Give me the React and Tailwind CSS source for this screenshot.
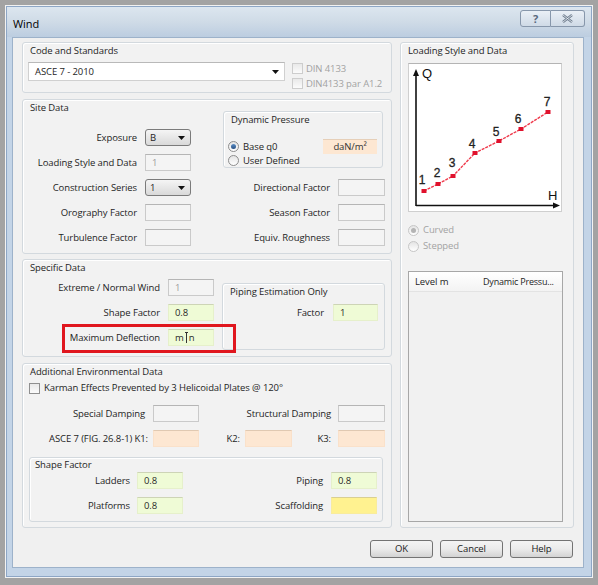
import React from "react";

const tones = {
  plain: "bg-[#f4f4f4] border-[#cacaca] border-t-[#b5b5b5]",
  green: "bg-[#effbd6] border-[#e6f0cb] border-t-[#cdd4b6]",
  orange: "bg-[#fde7d2] border-[#fae1ca] border-t-[#e0c9b2]",
  yellow: "bg-[#fff290] border-[#f9ec9c] border-t-[#d9cf92]",
};

function Field({ w = "w-[46px]", tone = "plain", muted = false, children }) {
  return (
    <div
      className={`${w} h-[17px] shrink-0 flex items-center pl-[6px] border ${tones[tone]} ${
        muted ? "text-[#9c9c9c]" : "text-[#2a2a2a]"
      }`}
    >
      {children}
    </div>
  );
}

function Arrow() {
  return (
    <svg width="7" height="4" viewBox="0 0 7 4">
      <path d="M0 0H7L3.5 4Z" fill="#111" />
    </svg>
  );
}

function Combo({ value }) {
  return (
    <div className="w-[46px] h-[17px] shrink-0 flex items-center justify-between pl-[4px] pr-[5px] rounded-[3px] border border-[#7b7b7b] bg-gradient-to-b from-[#f5f5f5] to-[#d9d9d9]">
      <span>{value}</span>
      <Arrow />
    </div>
  );
}

function Radio({ checked = false, disabled = false }) {
  return (
    <div
      className={`w-[11px] h-[11px] shrink-0 rounded-full border flex items-center justify-center bg-gradient-to-b from-[#e4e4e4] to-[#ffffff] ${
        disabled ? "border-[#c6c6c6]" : "border-[#8d8d8d]"
      }`}
    >
      {checked && (
        <div
          className={`w-[5px] h-[5px] rounded-full ${
            disabled ? "bg-[#b4b4b4]" : "bg-gradient-to-b from-[#5d8fc6] to-[#274f82]"
          }`}
        />
      )}
    </div>
  );
}

function Check({ disabled = false }) {
  return (
    <div
      className={`w-[11px] h-[11px] shrink-0 border bg-gradient-to-b from-[#e9e9e9] to-[#fbfbfb] ${
        disabled ? "border-[#cdcdcd]" : "border-[#8f8f8f]"
      }`}
    />
  );
}

function GroupLabel({ children }) {
  return <div className="h-[16px] shrink-0 pl-[7px] flex items-center whitespace-nowrap">{children}</div>;
}

const groupCls =
  "border border-[#d3d9de] rounded-[3px] bg-[#f2f2f2] shadow-[inset_1px_1px_0_#ffffff]";

function Chart() {
  const pts = [
    [16, 128],
    [30, 121],
    [45, 113],
    [67, 90],
    [91, 78],
    [113, 66],
    [140, 49],
  ];
  const labels = [
    [14, 121],
    [29, 114],
    [44, 104],
    [64, 85],
    [88, 73],
    [110, 60],
    [139, 43],
  ];
  return (
    <svg width="154" height="149" viewBox="0 0 154 149" className="block">
      <rect x="0.5" y="0.5" width="153" height="148" fill="#ffffff" stroke="#cfcfcf" />
      <line x1="0.5" y1="0.5" x2="153.5" y2="0.5" stroke="#b4b4b4" />
      <line x1="8" y1="143" x2="8" y2="12" stroke="#111" strokeWidth="1.6" />
      <polygon points="8,6 5,13 11,13" fill="#111" />
      <line x1="8" y1="142.5" x2="146" y2="142.5" stroke="#111" strokeWidth="1.6" />
      <polygon points="152,142.5 145,139.5 145,145.5" fill="#111" />
      <text x="14" y="15" fontSize="13" fontFamily="Liberation Sans, Arial, sans-serif" fill="#111">
        Q
      </text>
      <text x="140" y="137" fontSize="13" fontFamily="Liberation Sans, Arial, sans-serif" fill="#111">
        H
      </text>
      <polyline
        points={pts.map((p) => p.join(",")).join(" ")}
        fill="none"
        stroke="#ef3a4c"
        strokeWidth="1.4"
        strokeDasharray="3 1"
      />
      {pts.map(([x, y], i) => (
        <rect key={i} x={x - 2.5} y={y - 2} width="5" height="4" fill="#e0112c" />
      ))}
      {labels.map(([x, y], i) => (
        <text
          key={i}
          x={x}
          y={y}
          textAnchor="middle"
          fontSize="12"
          fontFamily="Liberation Sans, Arial, sans-serif"
          stroke="#222"
          strokeWidth="0.3"
          fill="#222"
        >
          {i + 1}
        </text>
      ))}
    </svg>
  );
}

function Button({ children }) {
  return (
    <div className="w-[63px] h-[18px] flex items-center justify-center rounded-[3px] border border-[#737373] bg-gradient-to-b from-[#f4f4f4] via-[#ebebeb] to-[#d3d3d3] text-[#1a1a1a]">
      {children}
    </div>
  );
}

export default function App() {
  return (
    <div className="w-[598px] h-[585px] overflow-hidden bg-[#a3a3a3] pt-[5px] pl-[5px] font-['Open_Sans','Noto_Sans',sans-serif] text-[9.5px] tracking-[-0.1px] leading-none text-[#1e1e1e]">
      <div className="w-[588px] h-[573px] border border-[#f2f2f2]">
        <div className="w-[586px] h-[571px] flex flex-col border border-[#8da6c5] bg-[#c3d4e7]">
          {/* Title bar */}
          <div className="h-[30px] shrink-0 flex items-start bg-gradient-to-b from-[#dce6ef] via-[#cfdbe7] to-[#bccde0]">
            <span className="mt-[11px] ml-[6px] text-[11px] text-black">Wind</span>
            <div className="ml-auto mr-[6px] mt-[3px] flex">
              <div className="w-[31px] h-[17px] flex items-center justify-center rounded-l-[3px] border border-[#8797ab] bg-gradient-to-b from-[#eaf0f6] to-[#cfdae6] text-[11px] font-bold text-[#59697d]">
                ?
              </div>
              <div className="w-[34px] h-[17px] flex items-center justify-center rounded-r-[3px] border border-l-0 border-[#8797ab] bg-gradient-to-b from-[#eaf0f6] to-[#cfdae6]">
                <svg width="11" height="9" viewBox="0 0 11 9">
                  <path d="M1 1L10 8M10 1L1 8" stroke="#6b7a8c" strokeWidth="2.4" />
                  <path d="M1 1L10 8M10 1L1 8" stroke="#eef2f6" strokeWidth="0.8" />
                </svg>
              </div>
            </div>
          </div>

          {/* Client */}
          <div className="ml-[5px] w-[572px] h-[531px] border border-[#9db2ca] bg-[#f0f0f0] flex flex-col">
            <div className="flex pt-[4px] pl-[9px]">
              {/* Left column */}
              <div className="w-[370px] flex flex-col">
                {/* Code and Standards */}
                <div className={`h-[51px] ${groupCls}`}>
                  <GroupLabel>Code and Standards</GroupLabel>
                  <div className="flex">
                    <div className="ml-[5px] mt-[3px] w-[257px] h-[19px] flex items-center justify-between pl-[6px] pr-[5px] bg-white border border-[#d0d0d0] border-t-[#b9b9b9]">
                      <span>ASCE 7 - 2010</span>
                      <Arrow />
                    </div>
                    <div className="ml-[7px] mt-[2px] flex flex-col text-[#a2a2a2]">
                      <div className="h-[15px] flex items-center gap-[3px]">
                        <Check disabled />
                        <span>DIN 4133</span>
                      </div>
                      <div className="h-[15px] flex items-center gap-[3px]">
                        <Check disabled />
                        <span>DIN4133 par A1.2</span>
                      </div>
                    </div>
                  </div>
                </div>

                {/* Site Data */}
                <div className={`mt-[6px] h-[155px] flex ${groupCls}`}>
                  <div className="w-[168px] flex flex-col">
                    <GroupLabel>Site Data</GroupLabel>
                    <div className="mt-[13px] flex flex-col gap-[8px]">
                      <div className="h-[17px] flex items-center justify-end">
                        <span>Exposure</span>
                        <div className="ml-[8px]">
                          <Combo value="B" />
                        </div>
                      </div>
                      <div className="h-[17px] flex items-center justify-end">
                        <span>Loading Style and Data</span>
                        <div className="ml-[8px]">
                          <Field muted>1</Field>
                        </div>
                      </div>
                      <div className="h-[17px] flex items-center justify-end">
                        <span>Construction Series</span>
                        <div className="ml-[8px]">
                          <Combo value="1" />
                        </div>
                      </div>
                      <div className="h-[17px] flex items-center justify-end">
                        <span>Orography Factor</span>
                        <div className="ml-[8px]">
                          <Field />
                        </div>
                      </div>
                      <div className="h-[17px] flex items-center justify-end">
                        <span>Turbulence Factor</span>
                        <div className="ml-[8px]">
                          <Field />
                        </div>
                      </div>
                    </div>
                  </div>
                  <div className="ml-[32px] pt-[11px] w-[162px] flex flex-col">
                    <div className={`w-[160px] h-[57px] flex flex-col ${groupCls}`}>
                      <GroupLabel>Dynamic Pressure</GroupLabel>
                      <div className="mt-[11px] h-[17px] flex items-center pl-[4px]">
                        <Radio checked />
                        <span className="ml-[4px]">Base q0</span>
                        <div className="ml-auto mr-[5px] w-[54px] h-[15px] flex items-center justify-center bg-[#fde7d2] border-t border-[#e6cfb8] text-[#333]">
                          daN/m²
                        </div>
                      </div>
                      <div className="h-[16px] flex items-center pl-[4px]">
                        <Radio />
                        <span className="ml-[4px]">User Defined</span>
                      </div>
                    </div>
                    <div className="mt-[11px] flex flex-col gap-[8px]">
                      <div className="h-[17px] flex items-center justify-end">
                        <span>Directional Factor</span>
                        <div className="ml-[8px]">
                          <Field w="w-[47px]" />
                        </div>
                      </div>
                      <div className="h-[17px] flex items-center justify-end">
                        <span>Season Factor</span>
                        <div className="ml-[8px]">
                          <Field w="w-[47px]" />
                        </div>
                      </div>
                      <div className="h-[17px] flex items-center justify-end">
                        <span>Equiv. Roughness</span>
                        <div className="ml-[8px]">
                          <Field w="w-[47px]" />
                        </div>
                      </div>
                    </div>
                  </div>
                </div>

                {/* Specific Data */}
                <div className={`relative mt-[5px] h-[98px] flex ${groupCls}`}>
                  <div className="w-[191px] flex flex-col">
                    <GroupLabel>Specific Data</GroupLabel>
                    <div className="mt-[3px] flex flex-col gap-[8px]">
                      <div className="h-[17px] flex items-center justify-end">
                        <span>Extreme / Normal Wind</span>
                        <div className="ml-[8px]">
                          <Field muted>1</Field>
                        </div>
                      </div>
                      <div className="h-[17px] flex items-center justify-end">
                        <span>Shape Factor</span>
                        <div className="ml-[8px]">
                          <Field tone="green">0.8</Field>
                        </div>
                      </div>
                      <div className="h-[17px] flex items-center justify-end">
                        <span>Maximum Deflection</span>
                        <div className="ml-[8px]">
                          <Field tone="green">
                            <span>m</span>
                            <span className="relative inline-block w-[3px] h-[11px] mx-[1px]">
                              <span className="absolute left-[1px] top-0 w-[1px] h-[11px] bg-[#333]" />
                              <span className="absolute left-0 top-0 w-[3px] h-[1px] bg-[#333]" />
                            </span>
                            <span>n</span>
                          </Field>
                        </div>
                      </div>
                    </div>
                  </div>
                  <div className={`ml-[8px] mt-[23px] w-[163px] h-[67px] flex flex-col ${groupCls}`}>
                    <GroupLabel>Piping Estimation Only</GroupLabel>
                    <div className="mt-[4px] h-[17px] flex items-center justify-end pr-[6px]">
                      <span>Factor</span>
                      <div className="ml-[9px]">
                        <Field w="w-[45px]" tone="green">1</Field>
                      </div>
                    </div>
                  </div>
                  <div className="absolute left-[39px] top-[64px] w-[174px] h-[29px] border-[3px] border-[#e0161e]" />
                </div>

                {/* Additional Environmental Data */}
                <div className={`mt-[6px] h-[165px] flex flex-col ${groupCls}`}>
                  <GroupLabel>Additional Environmental Data</GroupLabel>
                  <div className="mt-[2px] h-[12px] flex items-center pl-[6px]">
                    <Check />
                    <span className="ml-[4px]">Karman Effects Prevented by 3 Helicoidal Plates @ 120°</span>
                  </div>
                  <div className="mt-[11px] h-[17px] flex items-center">
                    <div className="w-[122px] text-right">Special Damping</div>
                    <div className="ml-[8px]">
                      <Field />
                    </div>
                    <div className="w-[132px] text-right">Structural Damping</div>
                    <div className="ml-[7px]">
                      <Field w="w-[47px]" />
                    </div>
                  </div>
                  <div className="mt-[8px] h-[17px] flex items-center">
                    <div className="w-[125px] text-right">ASCE 7 (FIG. 26.8-1) K1:</div>
                    <div className="ml-[5px]">
                      <Field tone="orange" />
                    </div>
                    <div className="w-[41px] text-right">K2:</div>
                    <div className="ml-[5px]">
                      <Field w="w-[47px]" tone="orange" />
                    </div>
                    <div className="w-[39px] text-right">K3:</div>
                    <div className="ml-[7px]">
                      <Field w="w-[47px]" tone="orange" />
                    </div>
                  </div>
                  <div className={`mt-[10px] ml-[6px] w-[354px] h-[65px] flex flex-col ${groupCls}`}>
                    <div className="h-[13px] pl-[5px] flex items-center">Shape Factor</div>
                    <div className="mt-[1px] h-[17px] flex items-center">
                      <div className="w-[100px] text-right">Ladders</div>
                      <div className="ml-[7px]">
                        <Field tone="green">0.8</Field>
                      </div>
                      <div className="w-[140px] text-right">Piping</div>
                      <div className="ml-[8px]">
                        <Field tone="green">0.8</Field>
                      </div>
                    </div>
                    <div className="mt-[8px] h-[17px] flex items-center">
                      <div className="w-[100px] text-right">Platforms</div>
                      <div className="ml-[7px]">
                        <Field tone="green">0.8</Field>
                      </div>
                      <div className="w-[140px] text-right">Scaffolding</div>
                      <div className="ml-[8px]">
                        <Field tone="yellow" />
                      </div>
                    </div>
                  </div>
                </div>
              </div>

              {/* Right column */}
              <div className={`ml-[8px] w-[174px] h-[486px] flex flex-col ${groupCls}`}>
                <GroupLabel>Loading Style and Data</GroupLabel>
                <div className="mt-[4px] ml-[7px]">
                  <Chart />
                </div>
                <div className="mt-[11px] h-[14px] pl-[7px] flex items-center text-[#a3a3a3]">
                  <Radio checked disabled />
                  <span className="ml-[4px]">Curved</span>
                </div>
                <div className="mt-[2px] h-[14px] pl-[7px] flex items-center text-[#a3a3a3]">
                  <Radio disabled />
                  <span className="ml-[4px]">Stepped</span>
                </div>
                <div className="mt-[18px] ml-[7px] w-[155px] h-[251px] border border-[#a7a7a7] bg-[#f1f1f1] flex flex-col overflow-hidden">
                  <div className="h-[20px] shrink-0 flex items-center whitespace-nowrap bg-gradient-to-b from-[#ffffff] to-[#f3f3f3] border-b border-[#e3e3e3]">
                    <span className="ml-[6px] w-[68px]">Level m</span>
                    <span className="text-[9px] tracking-[-0.2px]">Dynamic Pressu...</span>
                  </div>
                </div>
              </div>
            </div>

            {/* Buttons */}
            <div className="mt-[12px] pr-[10px] flex justify-end gap-[7px]">
              <Button>OK</Button>
              <Button>Cancel</Button>
              <Button>Help</Button>
            </div>
          </div>
        </div>
      </div>
    </div>
  );
}
